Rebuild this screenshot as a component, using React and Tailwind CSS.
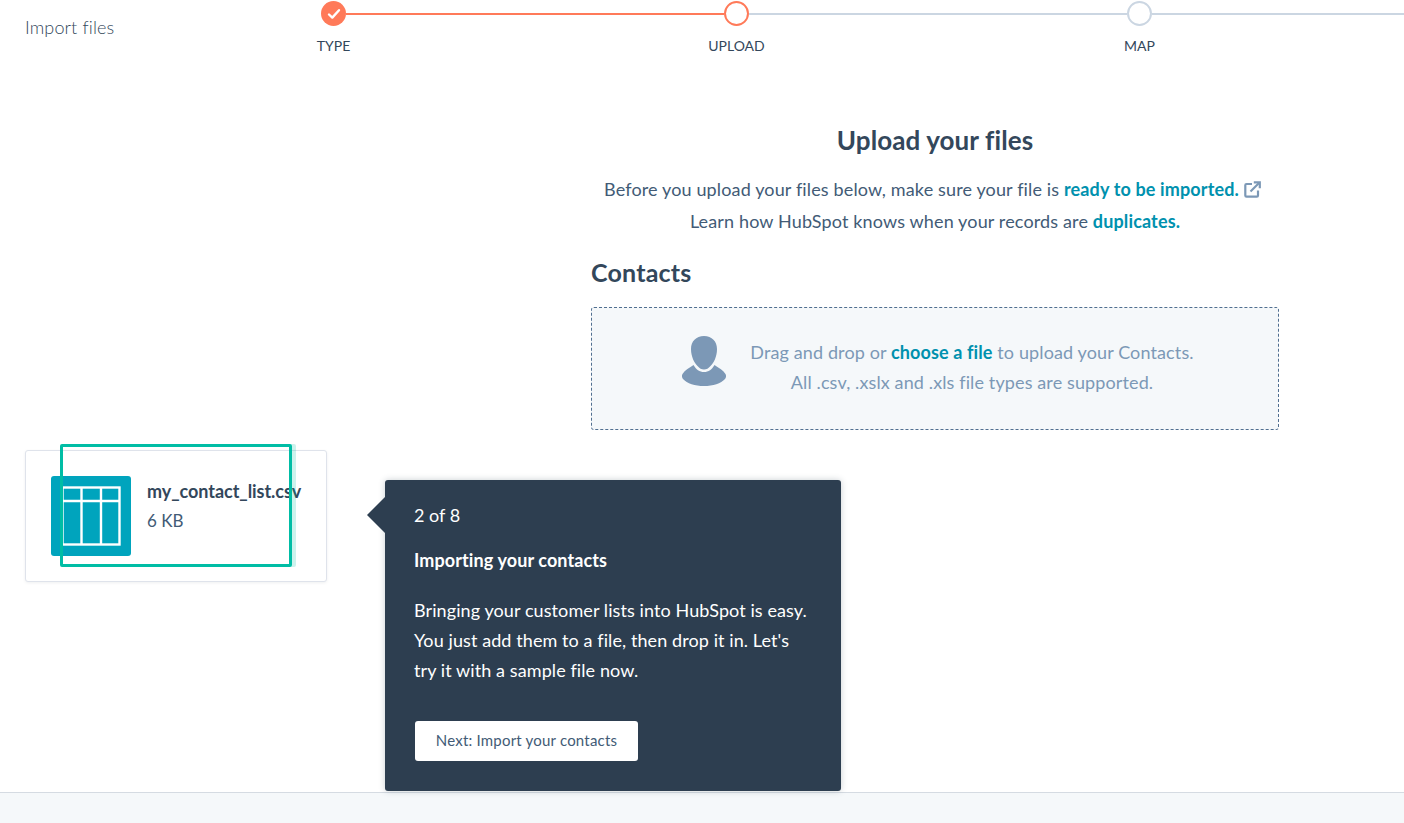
import React from "react";

function Check() {
  return (
    <svg width="14" height="12" viewBox="0 0 14 12" fill="none">
      <path d="M2 6.5 L5.3 9.6 L12 2.2" stroke="#fff" strokeWidth="2.4" strokeLinecap="round" strokeLinejoin="round" />
    </svg>
  );
}

function ExternalLink() {
  return (
    <svg width="17" height="17" viewBox="0 0 17 17" fill="none" stroke="#7c98b6" strokeWidth="2.2" className="inline-block ml-[5px] mr-[5px] align-[-2px]">
      <path d="M8 3 H2.5 a1.2 1.2 0 0 0 -1.2 1.2 V14.5 a1.2 1.2 0 0 0 1.2 1.2 H12.8 a1.2 1.2 0 0 0 1.2 -1.2 V9.5" />
      <path d="M6.5 10.5 L15 2" />
      <path d="M9.8 1.3 H15.8 V7.3" />
    </svg>
  );
}

function Person() {
  return (
    <svg width="44" height="50" viewBox="0 0 44 50" fill="#7c98b6">
      <path d="M22 0 C14 0 9 5.5 9 13 C9 21 12.5 27 15.5 30 C17.5 32.5 19.5 33.5 22 33.5 C24.5 33.5 26.5 32.5 28.5 30 C31.5 27 35 21 35 13 C35 5.5 30 0 22 0 Z" />
      <path d="M11.5 29 C7 32 2.5 34.5 0.5 38 C-0.5 40 0 41.5 1 43 C5 47.5 13 50 22 50 C31 50 39 47.5 43 43 C44 41.5 44.5 40 43.5 38 C41.5 34.5 37 32 32.5 29 C30 33.5 26.5 36 22 36 C17.5 36 14 33.5 11.5 29 Z" />
    </svg>
  );
}

function Circle({ state }) {
  if (state === "done") {
    return <div className="w-[25px] h-[25px] shrink-0 rounded-full bg-[#ff7a59] flex items-center justify-center"><Check /></div>;
  }
  if (state === "active") {
    return <div className="w-[25px] h-[25px] shrink-0 rounded-full border-2 border-[#ff7a59] bg-white" />;
  }
  return <div className="w-[25px] h-[25px] shrink-0 rounded-full border-2 border-[#cbd6e2] bg-white" />;
}

export default function App() {
  return (
    <div className="relative w-[1404px] h-[823px] overflow-hidden bg-white flex flex-col font-['Lato','Noto_Sans',sans-serif] text-[#33475b]">
      <div className="flex-1 min-h-0 flex flex-col">
        <header className="relative flex h-[60px]">
          <div className="w-[321px] pl-[25px] pt-[16px] text-[18px] leading-[22px] tracking-[0.15px] font-light text-[#33475b] shrink-0">Import files</div>
          <div className="flex-1 flex flex-col pt-[1px]">
            <div className="flex items-center">
              <Circle state="done" />
              <div className="w-[378px] h-[2px] bg-[#ff7a59]" />
              <Circle state="active" />
              <div className="w-[378px] h-[2px] bg-[#cbd6e2]" />
              <Circle state="todo" />
              <div className="flex-1 h-[2px] bg-[#cbd6e2]" />
            </div>
            <div className="flex -ml-[189px] mt-[11px] text-[14px] leading-[18px] text-[#33475b]">
              <div className="w-[403px] text-center">TYPE</div>
              <div className="w-[403px] text-center">UPLOAD</div>
              <div className="w-[403px] text-center">MAP</div>
            </div>
          </div>
        </header>

        <main className="ml-[591px] w-[688px] pt-[64px]">
          <h1 className="text-center text-[26px] leading-[32px] font-bold tracking-[0.1px]">Upload your files</h1>
          <p className="mt-[17px] text-center text-[18px] leading-[32px] tracking-[0.14px] font-normal text-[#425b76] whitespace-nowrap">
            Before you upload your files below, make sure your file is{" "}
            <span className="font-bold text-[#0091ae]">ready to be imported.</span>
            <ExternalLink />
            <br />
            Learn how HubSpot knows when your records are <span className="font-bold text-[#0091ae]">duplicates.</span>
          </p>
          <h2 className="mt-[20px] text-[25px] leading-[30px] tracking-[0.2px] font-bold">Contacts</h2>
          <div className="mt-[20px] h-[123px] rounded-[3px] border border-dashed border-[#516f90] bg-[#f5f8fa] flex items-center pl-[90px]">
            <div className="shrink-0 -mt-[15px]"><Person /></div>
            <div className="flex-1 pr-[60px] -mt-[3px] text-center text-[18px] leading-[30px] tracking-[0.12px] text-[#7c98b6] whitespace-nowrap">
              Drag and drop or <span className="font-bold text-[#0091ae]">choose a file</span> to upload your Contacts.
              <br />
              All .csv, .xslx and .xls file types are supported.
            </div>
          </div>
        </main>
      </div>

      <footer className="h-[31px] shrink-0 border-t border-[#d5dbe2] bg-[#f5f8fa]" />

      {/* draggable file card */}
      <div className="absolute left-[25px] top-[450px] w-[302px] h-[132px] rounded-[3px] border border-[#dfe3eb] bg-white shadow-[0_1px_3px_rgba(45,62,80,0.08)] flex items-center pl-[25px]">
        <div className="w-[80px] h-[80px] rounded-[3px] bg-[#00a4bd] flex items-center justify-center shrink-0">
          <svg width="60" height="60" viewBox="0 0 60 60" fill="none" stroke="#fff" strokeWidth="2.4">
            <rect x="1.5" y="1.5" width="57" height="57" />
            <path d="M1 15 H59 M20.5 1 V59 M40 1 V59" />
          </svg>
        </div>
        <div className="ml-[16px] -mt-[20px]">
          <div className="text-[18px] leading-[30px] font-bold text-[#33475b] tracking-[-0.05px]">my_contact_list.csv</div>
          <div className="text-[17px] leading-[30px] text-[#425b76]">6 KB</div>
        </div>
      </div>

      {/* highlight */}
      <div className="absolute left-[60px] top-[444px] w-[232px] h-[123px] rounded-[2px] border-[3px] border-[#00bda5] shadow-[4px_0_0_rgba(0,189,165,0.2)]" />

      {/* tooltip */}
      <div className="absolute left-[385px] top-[480px] w-[456px] h-[311px] rounded-[3px] bg-[#2d3e50] shadow-[0_0_6px_rgba(45,62,80,0.25)] pl-[29px] pr-[30px] pt-[20px] text-white">
        <div className="absolute -left-[18px] top-[17px] w-0 h-0 border-y-[18px] border-y-transparent border-r-[18px] border-r-[#2d3e50]" />
        <div className="text-[18px] leading-[30px]">2 of 8</div>
        <div className="mt-[15px] text-[18px] leading-[30px] tracking-[0.1px] font-bold">Importing your contacts</div>
        <p className="mt-[20px] text-[18px] leading-[30px] tracking-[0.09px] whitespace-nowrap">
          Bringing your customer lists into HubSpot is easy.
          <br />
          You just add them to a file, then drop it in. Let's
          <br />
          try it with a sample file now.
        </p>
        <button className="mt-[36px] ml-[1px] block w-[223px] h-[40px] pb-[2px] rounded-[3px] bg-white text-[15px] tracking-[0.2px] text-[#425b76] text-center">
          Next: Import your contacts
        </button>
      </div>
    </div>
  );
}
